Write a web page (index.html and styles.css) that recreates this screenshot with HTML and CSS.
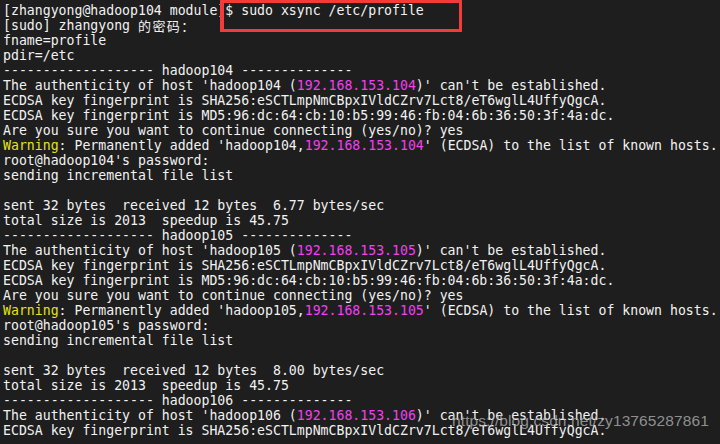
FILE: index.html
```html
<!DOCTYPE html>
<html>
<head>
<meta charset="utf-8">
<link rel="stylesheet" href="styles.css">
</head>
<body>
<div class="term">
<div class="ln">[zhangyong@hadoop104 module]$ sudo xsync /etc/profile</div>
<div class="ln">[sudo] zhangyong <span class="w">的</span><span class="w">密</span><span class="w">码</span><span class="w">：</span></div>
<div class="ln">fname=profile</div>
<div class="ln">pdir=/etc</div>
<div class="ln">------------------- hadoop104 --------------</div>
<div class="ln">The authenticity of host 'hadoop104 (<span class="ip">192.168.153.104</span>)' can't be established.</div>
<div class="ln">ECDSA key fingerprint is SHA256:eSCTLmpNmCBpxIVldCZrv7Lct8/eT6wglL4UffyQgcA.</div>
<div class="ln">ECDSA key fingerprint is MD5:96:dc:64:cb:10:b5:99:46:fb:04:6b:36:50:3f:4a:dc.</div>
<div class="ln">Are you sure you want to continue connecting (yes/no)? yes</div>
<div class="ln"><span class="warn">Warning</span>: Permanently added 'hadoop104,<span class="ip">192.168.153.104</span>' (ECDSA) to the list of known hosts.</div>
<div class="ln">root@hadoop104's password: </div>
<div class="ln">sending incremental file list</div>
<div class="ln"> </div>
<div class="ln">sent 32 bytes  received 12 bytes  6.77 bytes/sec</div>
<div class="ln">total size is 2013  speedup is 45.75</div>
<div class="ln">------------------- hadoop105 --------------</div>
<div class="ln">The authenticity of host 'hadoop105 (<span class="ip">192.168.153.105</span>)' can't be established.</div>
<div class="ln">ECDSA key fingerprint is SHA256:eSCTLmpNmCBpxIVldCZrv7Lct8/eT6wglL4UffyQgcA.</div>
<div class="ln">ECDSA key fingerprint is MD5:96:dc:64:cb:10:b5:99:46:fb:04:6b:36:50:3f:4a:dc.</div>
<div class="ln">Are you sure you want to continue connecting (yes/no)? yes</div>
<div class="ln"><span class="warn">Warning</span>: Permanently added 'hadoop105,<span class="ip">192.168.153.105</span>' (ECDSA) to the list of known hosts.</div>
<div class="ln">root@hadoop105's password: </div>
<div class="ln">sending incremental file list</div>
<div class="ln"> </div>
<div class="ln">sent 32 bytes  received 12 bytes  8.00 bytes/sec</div>
<div class="ln">total size is 2013  speedup is 45.75</div>
<div class="ln">------------------- hadoop106 --------------</div>
<div class="ln">The authenticity of host 'hadoop106 (<span class="ip">192.168.153.106</span>)' can't be established.</div>
<div class="ln">ECDSA key fingerprint is SHA256:eSCTLmpNmCBpxIVldCZrv7Lct8/eT6wglL4UffyQgcA.</div>
</div>
<div class="mark"></div>
<div class="wm">https://blog.csdn.net/zy13765287861</div>
</body>
</html>
```
FILE: styles.css
```css
html, body {
  margin: 0;
  padding: 0;
  width: 720px;
  height: 444px;
  overflow: hidden;
  background: #1e1e1e;
}
body {
  position: relative;
}
.term {
  padding: 3px 0 0 3px;
  font-family: "DejaVu Sans Mono", "Noto Sans CJK SC", monospace;
  font-size: 13.2px;
  line-height: 15px;
  color: #f2f2f2;
}
.ln {
  white-space: pre;
  height: 15px;
  overflow: visible;
}
.w {
  display: inline-block;
  width: 2ch;
  height: 15px;
  line-height: 15px;
  vertical-align: top;
  font-family: "Noto Sans CJK SC", sans-serif;
  font-size: 13px;
  text-align: left;
}
.ip {
  color: #f43ef4;
}
.warn {
  color: #e3e31a;
}
.mark {
  position: absolute;
  left: 220px;
  top: 0;
  width: 235px;
  height: 26px;
  border: 3px solid #f23b3b;
  border-left-width: 4px;
}
.wm {
  position: absolute;
  left: 452px;
  top: 412px;
  font-family: "Liberation Sans", Arial, sans-serif;
  font-size: 15.5px;
  color: rgba(175, 175, 175, 0.8);
  letter-spacing: 0.1px;
}
```
